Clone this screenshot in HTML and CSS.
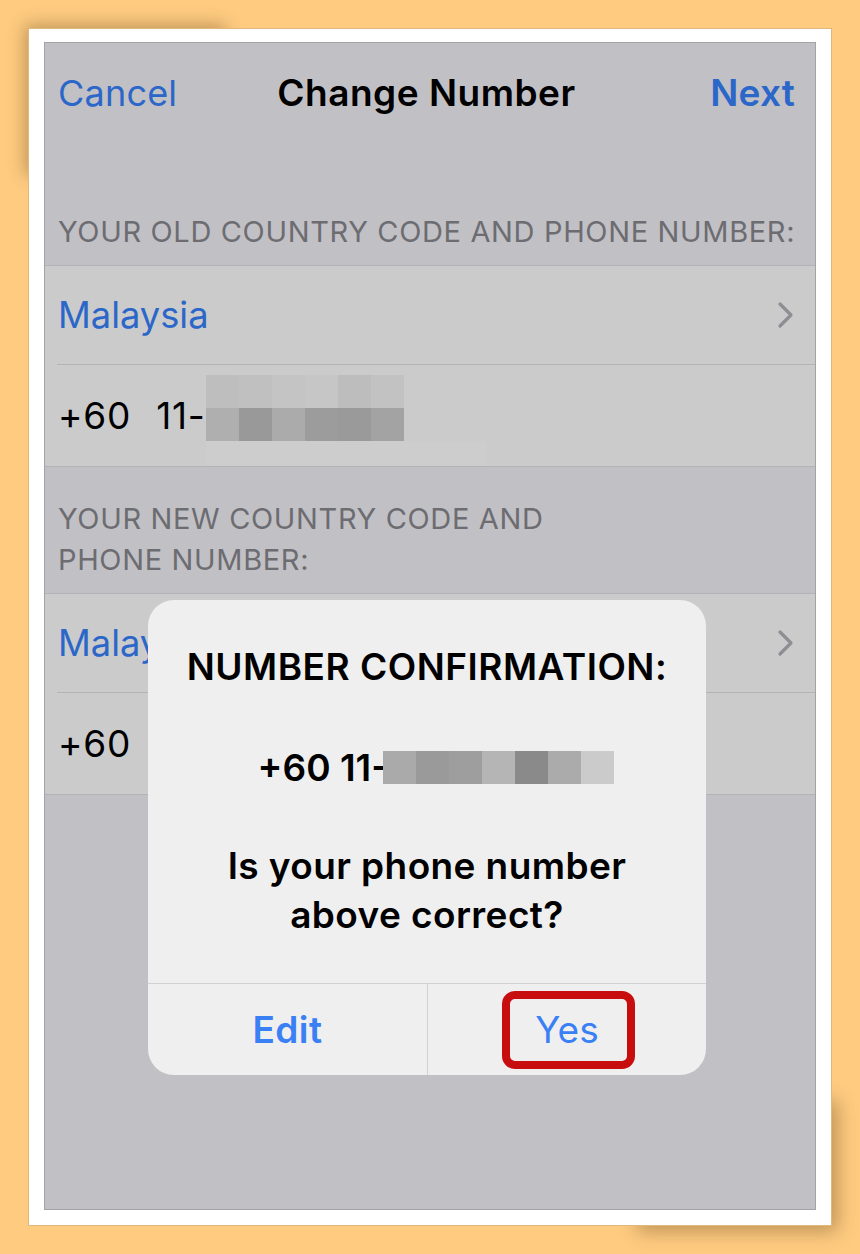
FILE: index.html
```html
<!DOCTYPE html>
<html lang="en">
<head>
<meta charset="utf-8">
<title>Change Number</title>
<link rel="stylesheet" href="styles.css">
</head>
<body>
<div class="card">
  <div class="screen">
    <div class="nav">
      <span class="nav-btn">Cancel</span>
      <span class="nav-title">Change Number</span>
      <span class="nav-btn strong">Next</span>
    </div>

    <div class="section-header first">YOUR OLD COUNTRY CODE AND PHONE NUMBER:</div>
    <div class="group">
      <div class="cell">
        <div class="cell-inner sep">
          <span class="country">Malaysia</span>
          <svg class="chev" width="18" height="28" viewBox="0 0 18 28"><path d="M3 3 L14 14 L3 25" fill="none" stroke="currentColor" stroke-width="3.2" stroke-linecap="round" stroke-linejoin="round"/></svg>
        </div>
      </div>
      <div class="cell tall">
        <div class="cell-inner">
          <span class="phone">+60</span><span class="phone local">11-</span>
          <div class="pix-wrap">
            <div class="pix six">
              <i class="c-be"></i><i class="c-c0"></i><i class="c-c4"></i><i class="c-c6"></i><i class="c-bd"></i><i class="c-c2"></i>
              <i class="c-af"></i><i class="c-99"></i><i class="c-ab"></i><i class="c-9c"></i><i class="c-9a"></i><i class="c-a3"></i>
            </div>
            <div class="pix-strip"></div>
          </div>
        </div>
      </div>
    </div>

    <div class="section-header second">YOUR NEW COUNTRY CODE AND<br>PHONE NUMBER:</div>
    <div class="group">
      <div class="cell">
        <div class="cell-inner sep">
          <span class="country">Malaysia</span>
          <svg class="chev" width="18" height="28" viewBox="0 0 18 28"><path d="M3 3 L14 14 L3 25" fill="none" stroke="currentColor" stroke-width="3.2" stroke-linecap="round" stroke-linejoin="round"/></svg>
        </div>
      </div>
      <div class="cell tall">
        <div class="cell-inner">
          <span class="phone">+60</span>
        </div>
      </div>
    </div>

    <div class="alert">
      <div class="alert-body">
        <div class="alert-title">NUMBER CONFIRMATION:</div>
        <div class="alert-number">
          <span class="num-text">+60 11-</span>
          <div class="pix seven">
            <i class="c-aa"></i><i class="c-9a"></i><i class="c-9e"></i><i class="c-b5"></i><i class="c-8a"></i><i class="c-ab"></i><i class="c-cb"></i>
          </div>
        </div>
        <div class="alert-msg">Is your phone number<br>above correct?</div>
      </div>
      <div class="alert-actions">
        <div class="action bold">Edit</div>
        <div class="action"><span class="yes">Yes<span class="highlight"></span></span></div>
      </div>
    </div>
  </div>
</div>
</body>
</html>
```

FILE: styles.css
```css
html, body {
  margin: 0;
  padding: 0;
}
body {
  background: #fecb81;
  width: 860px;
  height: 1254px;
  overflow: hidden;
  font-family: "Inter", "Roboto", "Liberation Sans", sans-serif;
}
.card {
  position: relative;
  margin: 28px 0 0 28px;
  width: 804px;
  height: 1198px;
  box-sizing: border-box;
  background: #ffffff;
  border: 1px solid #e0b77c;
  padding: 13px 15px 15px 15px;
}
.card::before,
.card::after {
  content: "";
  position: absolute;
  z-index: -1;
}
.card::before {
  left: 4px;
  top: 4px;
  width: 200px;
  height: 150px;
  box-shadow: -8px -8px 16px rgba(90, 60, 20, 0.38);
}
.card::after {
  right: 4px;
  bottom: 4px;
  width: 200px;
  height: 130px;
  box-shadow: 10px 10px 18px rgba(90, 60, 20, 0.4);
}
.screen {
  position: relative;
  height: 100%;
  box-sizing: border-box;
  background: #c1c0c5;
  border: 1px solid #a3a3a7;
  overflow: hidden;
}
.nav {
  height: 99px;
  display: grid;
  grid-template-columns: 1fr auto 1fr;
  align-items: center;
  padding: 0 20px 0 13px;
}
.nav-btn {
  font-size: 36px;
  color: #2b66c9;
  letter-spacing: 0.2px;
}
.nav-btn.strong {
  justify-self: end;
  font-weight: 600;
  font-size: 37px;
}
.nav-title {
  font-size: 37px;
  font-weight: 600;
  color: #000;
  letter-spacing: 0.5px;
}
.section-header {
  color: #6c6c71;
  font-size: 29px;
  line-height: 41px;
  padding-left: 13px;
  letter-spacing: 0.65px;
  white-space: nowrap;
}
.section-header.first {
  padding-top: 69px;
  padding-bottom: 13px;
  height: 41px;
}
.section-header.second {
  padding-top: 31px;
  padding-bottom: 13px;
}
.group {
  background: #cbcbcb;
  border-top: 1px solid #b3b3b6;
  border-bottom: 1px solid #b3b3b6;
}
.cell {
  padding-left: 12px;
}
.cell-inner {
  height: 98px;
  display: flex;
  align-items: center;
  padding-left: 1px;
  padding-right: 20px;
}
.cell-inner.sep {
  border-bottom: 1px solid #b3b3b6;
}
.cell.tall .cell-inner {
  height: 101px;
}
.country {
  flex: 1;
  font-size: 36.3px;
  color: #2b66c9;
}
.chev {
  color: #8f8f93;
  display: block;
}
.phone {
  font-size: 37px;
  color: #000;
  letter-spacing: 0.8px;
}
.phone.local {
  margin-left: 25px;
}
.pix-wrap {
  align-self: stretch;
  display: flex;
  flex-direction: column;
  padding-top: 10px;
}
.pix {
  display: grid;
  grid-auto-rows: 33px;
}
.pix.six {
  grid-template-columns: repeat(6, 33px);
}
.pix.seven {
  grid-template-columns: repeat(7, 33px);
}
.pix i { display: block; }
.pix-strip {
  width: 280px;
  flex: 1;
  background: #cdcdcd;
}
.c-be { background: #bebebe; }
.c-c0 { background: #c0c0c0; }
.c-c4 { background: #c4c4c4; }
.c-c6 { background: #c6c6c6; }
.c-bd { background: #bdbdbd; }
.c-c2 { background: #c2c2c2; }
.c-af { background: #afafaf; }
.c-99 { background: #999999; }
.c-ab { background: #ababab; }
.c-9c { background: #9c9c9c; }
.c-9a { background: #9a9a9a; }
.c-a3 { background: #a3a3a3; }
.c-aa { background: #aaaaaa; }
.c-9e { background: #9e9e9e; }
.c-b5 { background: #b5b5b5; }
.c-8a { background: #8a8a8a; }
.c-cb { background: #cbcbcb; }

.alert {
  position: absolute;
  left: 103px;
  top: 557px;
  width: 558px;
  height: 475px;
  background: #efeff0;
  border-radius: 26px;
  display: flex;
  flex-direction: column;
  overflow: hidden;
}
.alert-body {
  height: 383px;
  box-sizing: border-box;
  padding-top: 45px;
  text-align: center;
  color: #000;
}
.alert-title {
  font-size: 37px;
  font-weight: 600;
  line-height: 44px;
  letter-spacing: 0.5px;
  white-space: nowrap;
}
.alert-number {
  margin-top: 56px;
  height: 44px;
  display: flex;
  align-items: center;
  justify-content: center;
  padding-left: 18px;
}
.num-text {
  font-size: 37px;
  font-weight: 600;
}
.alert-number .pix {
  margin-left: -5px;
}
.alert-msg {
  margin-top: 52px;
  font-size: 37px;
  font-weight: 600;
  line-height: 49px;
  letter-spacing: 0.4px;
}
.alert-actions {
  flex: 1;
  display: grid;
  grid-template-columns: 1fr 1fr;
  border-top: 1px solid #d2d2d5;
}
.action {
  display: flex;
  align-items: center;
  justify-content: center;
  font-size: 37px;
  color: #3a80f5;
}
.action + .action {
  border-left: 1px solid #d2d2d5;
}
.action.bold {
  font-weight: 600;
  letter-spacing: 0.5px;
}
.yes {
  position: relative;
  display: inline-block;
  line-height: 44px;
}
.highlight {
  position: absolute;
  left: -33px;
  top: -17px;
  width: 133px;
  height: 78px;
  box-sizing: border-box;
  border: 8px solid #c80d0f;
  border-radius: 13px;
}
```
